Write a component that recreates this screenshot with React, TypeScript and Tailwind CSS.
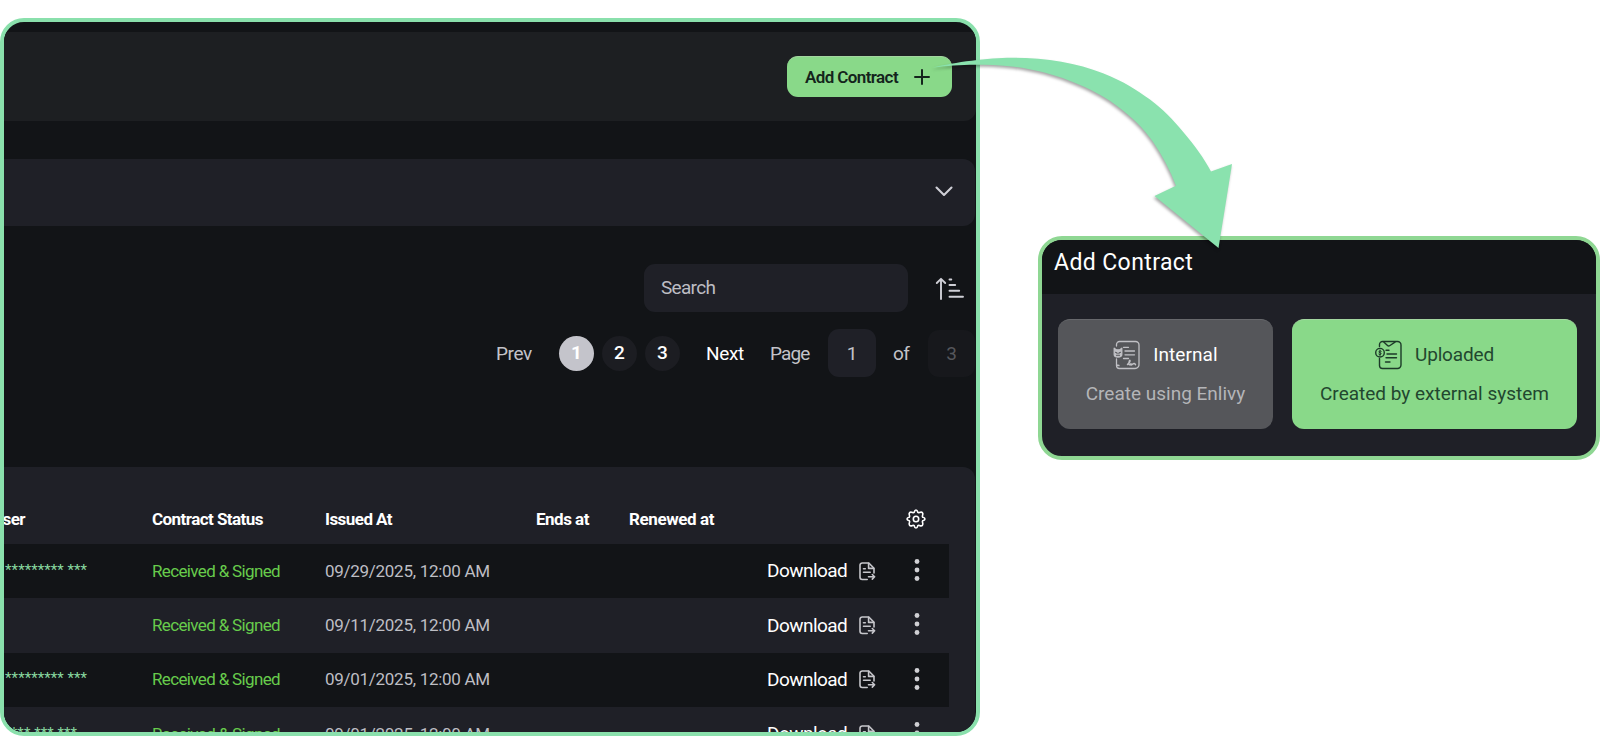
type Row = { user: string; date: string; shade: string };

const rows: Row[] = [
  { user: '********* ***', date: '09/29/2025, 12:00 AM', shade: 'bg-[#121417]' },
  { user: '', date: '09/11/2025, 12:00 AM', shade: 'bg-[#1f2027]' },
  { user: '********* ***', date: '09/01/2025, 12:00 AM', shade: 'bg-[#121417]' },
  { user: '*** *** ***', date: '09/01/2025, 12:00 AM', shade: 'bg-[#1f2027]' },
];

function PlusIcon() {
  return (
    <svg width="16" height="16" viewBox="0 0 16 16" fill="none" stroke="#14241c" strokeWidth="2" strokeLinecap="round">
      <path d="M8 1v14M1 8h14" />
    </svg>
  );
}

function ChevronIcon() {
  return (
    <svg width="18" height="11" viewBox="0 0 18 11" fill="none" stroke="#cfcfd6" strokeWidth="2.100" strokeLinecap="round" strokeLinejoin="round">
      <path d="M1.5 1.5L9 9l7.5-7.5" />
    </svg>
  );
}

function SortIcon() {
  return (
    <svg width="30" height="24" viewBox="0 0 30 24" fill="none" stroke="#cfcfd6" strokeWidth="1.9" strokeLinecap="round" strokeLinejoin="round">
      <path d="M6 22V2M1.8 6L6 1.8 10.2 6" />
      <path d="M14.5 2.5h1.8M14.5 8h5.7M14.5 13.8h9.7M14.5 19.8H28" />
    </svg>
  );
}

function GearIcon() {
  return (
    <svg width="20" height="20" viewBox="0 0 20 20" fill="none" stroke="#ffffff" strokeWidth="1.6" strokeLinejoin="round">
      <path d="M8.3 3.2Q8.7 1 10 1T11.7 3.2Q12.3 3.9 13.4 3.5 15.4 2.6 16.4 3.6T16.5 6.6Q16.1 7.7 16.8 8.3 19 8.7 19 10T16.8 11.7Q16.1 12.3 16.5 13.4 17.4 15.4 16.4 16.4T13.4 16.5Q12.3 16.1 11.7 16.8 11.3 19 10 19T8.3 16.8Q7.7 16.1 6.6 16.5 4.6 17.4 3.6 16.4T3.5 13.4Q3.9 12.3 3.2 11.7 1 11.3 1 10T3.2 8.3Q3.9 7.7 3.5 6.6 2.6 4.6 3.6 3.6T6.6 3.5Q7.7 3.9 8.3 3.2Z" />
      <circle cx="10" cy="10" r="2.7" />
    </svg>
  );
}

function FileIcon() {
  return (
    <svg width="17" height="19" viewBox="0 0 17 19" fill="none" stroke="#c6c6cb" strokeWidth="1.6" strokeLinecap="round" strokeLinejoin="round">
      <path d="M8.2 17.5H3.2A2.2 2.2 0 0 1 1 15.300V3.200A2.200 2.200 0 0 1 3.200 1H9.800L15 6.200V11" />
      <path d="M9.600 1.400V6.400H14.600M4.500 6.700H6.300M4.500 10.200H11.200M9.500 14.800H15.500M13.300 12.500L15.600 14.800 13.300 17.100" />
    </svg>
  );
}

function DotsIcon() {
  return (
    <svg width="6" height="24" viewBox="0 0 6 24" fill="#d0d0d4">
      <circle cx="3" cy="3.500" r="2.400" />
      <circle cx="3" cy="12" r="2.400" />
      <circle cx="3" cy="20.500" r="2.400" />
    </svg>
  );
}

function InternalIcon() {
  return (
    <svg width="28" height="30" viewBox="0 0 28 30" fill="none" stroke="#c0c0c5" strokeWidth="1.300" strokeLinecap="round" strokeLinejoin="round">
      <path d="M3.500 6V4.500A3 3 0 0 1 6.500 1.500H22.500A3.500 3.500 0 0 1 26 5V24A4 4 0 0 1 22 28.500H6.500A3 3 0 0 1 3.500 25.500V19M3.500 25L6 25.500" />
      <path d="M10.500 7.300H15.500M12 11H21.500M12 14.800H21.500M10.500 18.500H15.500" />
      <path d="M1.200 8.200L3.200 9.800H6.800L8.800 8.200V14.500Q8.800 17 5 17T1.200 14.500Z" fill="#c0c0c5" />
      <path d="M2.600 12.300L4.200 13.300M7.400 12.300L5.800 13.300M3.500 15.200H6.500" stroke="#55565a" strokeWidth="1.100" />
      <path d="M14.500 24.500Q17.500 21.500 17 20.500T15.800 23.500Q16 26 18 23.800 17.500 26 19.500 24.200T22.500 24.800" strokeWidth="1.500" />
    </svg>
  );
}

function UploadedIcon() {
  return (
    <svg width="28" height="30" viewBox="0 0 28 30" fill="none" stroke="#1c3a28" strokeWidth="1.400" strokeLinecap="round" strokeLinejoin="round">
      <path d="M4.500 6.500V4.500A3 3 0 0 1 7.500 1.500H22.500A3.500 3.500 0 0 1 26 5V25A3.500 3.500 0 0 1 22.500 28.500H7.500A3 3 0 0 1 4.500 25.500V18.500" />
      <path d="M8.500 1.800L12.500 5.500Q13.500 6.500 15 5.500L20 2.200M11 10.300H14M12 14H21.500M11 17.700H21.500M10.500 22H15" />
      <circle cx="5" cy="12.700" r="4.300" />
      <path d="M6.200 11.300Q5 10.300 4.100 11.300T5 12.700 5.900 14.200 3.800 14.200M5 10V15.500" strokeWidth="1" />
    </svg>
  );
}

function CurvedArrow() {
  return (
    <svg
      className="pointer-events-none absolute top-[40px] left-[920px] drop-shadow-[-1px_2px_1.500px_rgba(0,0,0,0.35)]"
      width="330"
      height="220"
      viewBox="920 40 330 220"
    >
      <path
        d="M933 67.500C955 62 990 57.500 1013 57.700C1048 58 1077 63 1103 73.300C1125 82 1136 90 1150 99.500C1163 109 1173 120 1183 131.700C1195 146 1204 158 1211 171.500L1232 164L1218.500 248L1154.500 196L1176 185.700C1170 170 1162 155 1153 141.700C1143 128 1133 118 1120 108.300C1108 98.500 1094 91 1080 85C1064 78 1050 73.500 1033 70C1015 66 997 64.500 980 64.700C962 64.500 948 65.500 933 67.500Z"
        fill="#8ae2ae"
      />
    </svg>
  );
}

function PageNumber({ label, active }: { label: string; active?: boolean }) {
  return (
    <div
      className={
        active
          ? 'flex size-[35px] items-center justify-center rounded-full bg-[#c4c4cb] pt-px text-[19px] font-bold text-white'
          : 'flex size-[35px] items-center justify-center rounded-full bg-[#1c1d22] pt-px text-[19px] font-medium text-white'
      }
    >
      {label}
    </div>
  );
}

function ContractsPanel() {
  return (
    <section className="mt-[18px] h-[718px] w-[980px] shrink-0 overflow-hidden rounded-[24px] border-4 border-[#8ae0ac] bg-[#121417]">
      <div className="mt-[10px] flex h-[89px] items-center justify-end rounded-br-[12px] bg-[#1d1f22] pr-[24px]">
        <button className="flex h-[41px] w-[165px] items-center justify-between rounded-[11px] border-t border-[#a3d6a0] bg-[#89d989] pr-[22px] pl-[18px] text-[17px] font-semibold tracking-[-0.6px] whitespace-nowrap text-[#14241c]">
          <span className="pt-px">Add Contract</span>
          <PlusIcon />
        </button>
      </div>

      <div className="mt-[38px] mr-px flex h-[67px] items-center justify-end rounded-r-[12px] bg-[#1f2027] pr-[22.500px] pb-[2px]">
        <ChevronIcon />
      </div>

      <div className="mt-[38px] flex items-center justify-end pr-[11px]">
        <div className="flex h-[48px] w-[264px] items-center rounded-[11px] bg-[#1f2027] pl-[17px] text-[19px] tracking-[-0.7px] text-[#bdbdc3]">
          Search
        </div>
        <div className="ml-[27px] pt-px">
          <SortIcon />
        </div>
      </div>

      <div className="mt-[17px] flex h-[48px] items-center pl-[492px] text-[19px] text-[#c3c3c9]">
        <span className="w-[63px] pt-[2px] tracking-[-0.4px]">Prev</span>
        <div className="flex gap-[8px]">
          <PageNumber label="1" active />
          <PageNumber label="2" />
          <PageNumber label="3" />
        </div>
        <span className="ml-[26px] w-[64px] pt-[2px] tracking-[-0.35px] text-white">Next</span>
        <span className="w-[58px] pt-[2px] tracking-[-0.9px]">Page</span>
        <div className="flex size-[48px] items-center justify-center rounded-[11px] bg-[#1f2027] pt-[2px]">1</div>
        <span className="w-[52px] pt-[2px] pl-[17px] tracking-[-0.7px]">of</span>
        <div className="flex size-[47px] shrink-0 items-center justify-center rounded-[11px] bg-[#17181c] pt-[2px] text-[#55565b]">3</div>
      </div>

      <div className="mt-[90px] mr-px h-[300px] rounded-tr-[12px] bg-[#1f2027] pr-[26px]">
        <div className="flex h-[77px] items-center pt-[28px] text-[17px] font-bold whitespace-nowrap text-white">
          <span className="-ml-[12px] w-[160px] tracking-[-0.6px]">User</span>
          <span className="w-[173px] tracking-[-0.55px]">Contract Status</span>
          <span className="w-[211px] tracking-[-0.55px]">Issued At</span>
          <span className="w-[93px] tracking-[-0.5px]">Ends at</span>
          <span className="w-[276.500px] tracking-[-0.4px]">Renewed at</span>
          <span className="pb-px">
            <GearIcon />
          </span>
        </div>
        {rows.map((row, i) => (
          <div key={i} className={`flex h-[54.300px] items-center pt-px text-[17px] whitespace-nowrap ${row.shade}`}>
            <span className="flex w-[148px] pb-[3px] text-[15px] tracking-[0.050px] text-[#89d9a0]">
              <span className="flex w-[83px] justify-end">
                <span className={i === 3 ? 'mr-[10px]' : ''}>{row.user}</span>
              </span>
            </span>
            <span className="w-[173px] tracking-[-0.65px] text-[#67cc4c]">Received &amp; Signed</span>
            <span className="w-[442px] tracking-[-0.28px] text-[#bebec4]">{row.date}</span>
            <span className="w-[92px] text-[19px] tracking-[-0.55px] text-white">Download</span>
            <span className="pb-px">
              <FileIcon />
            </span>
            <span className="ml-[37.500px] pb-[3px]">
              <DotsIcon />
            </span>
          </div>
        ))}
      </div>
    </section>
  );
}

function AddContractDialog() {
  return (
    <section className="mt-[236px] ml-[58px] h-[224px] w-[562px] shrink-0 overflow-hidden rounded-[24px] border-4 border-[#8fd793] bg-[#1f2027]">
      <h2 className="h-[54px] bg-[#121417] pt-[8px] pl-[12px] text-[23px] leading-[29px] tracking-[0.4px] whitespace-nowrap text-white">
        Add Contract
      </h2>
      <div className="flex gap-[19px] pt-[25px] pl-[16px] whitespace-nowrap">
        <button className="flex h-[110px] w-[215px] flex-col items-center rounded-[12px] border-t border-[#67686c] bg-[#55565a] pt-[20px]">
          <span className="flex h-[30px] items-center gap-[12px] text-[19px] tracking-[0.080px] text-white">
            <InternalIcon />
            Internal
          </span>
          <span className="mt-[11px] text-[19px] leading-[26px] text-[#b4b5b8]">Create using Enlivy</span>
        </button>
        <button className="flex h-[110px] w-[285px] flex-col items-center rounded-[12px] border-t border-[#a3d6a0] bg-[#89d989] pt-[20px]">
          <span className="flex h-[30px] items-center gap-[12px] text-[19px] tracking-[-0.16px] text-[#22472f]">
            <UploadedIcon />
            Uploaded
          </span>
          <span className="mt-[11px] text-[19px] leading-[26px] text-[#22472f]">Created by external system</span>
        </button>
      </div>
    </section>
  );
}

export default function App() {
  return (
    <main className="relative flex h-[736px] w-[1600px] items-start overflow-hidden bg-white font-['Roboto',sans-serif]">
      <ContractsPanel />
      <AddContractDialog />
      <CurvedArrow />
    </main>
  );
}
